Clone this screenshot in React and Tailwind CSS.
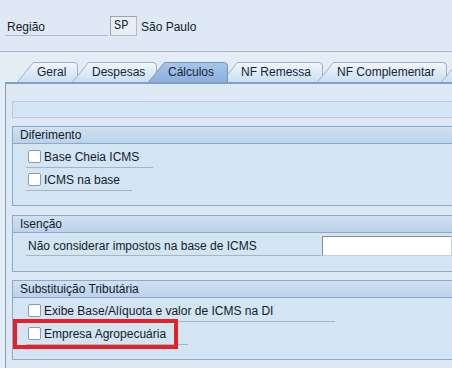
import React from 'react';

const tabs = [
  { label: 'Geral', w: 61, ml: 0 },
  { label: 'Despesas', w: 85, ml: -6 },
  { label: 'Cálculos', w: 80, ml: -9, active: true },
  { label: 'NF Remessa', w: 102, ml: -7 },
  { label: 'NF Complementar', w: 130, ml: -6 },
  { label: '', w: 40, ml: -6 },
];

function Tab({ label, w, ml, active }) {
  const id = active ? 'tabActive' : 'tabIdle';
  return (
    <div className={`relative h-[20px] shrink-0 ${active ? 'z-10' : ''}`} style={{ width: w, marginLeft: ml }}>
      <svg className="absolute inset-0" width={w} height="20" viewBox={`0 0 ${w} 20`}>
        <defs>
          <linearGradient id={id} x1="0" y1="0" x2="0" y2="1">
            <stop offset="0" stopColor={active ? '#a9c6e8' : '#f1f6fb'} />
            <stop offset="1" stopColor={active ? '#8bb0dc' : '#cddef0'} />
          </linearGradient>
        </defs>
        <path
          d={`M0.5 20 L16.5 0.5 L${w - 4} 0.5 Q${w - 0.5} 0.5 ${w - 0.5} 4 L${w - 0.5} 20`}
          fill={`url(#${id})`}
          stroke={active ? '#7596c0' : '#9ab1cc'}
          strokeWidth="1"
        />
      </svg>
      <span className="relative block pl-[20px] pt-[3px] text-[12px] leading-[15px] text-[#15233a] whitespace-nowrap">{label}</span>
    </div>
  );
}

function Check({ label, width }) {
  return (
    <div className="flex items-center h-[23px] border-b border-[#aab4c0] ml-[13px]" style={{ width }}>
      <span className="w-[13px] h-[13px] ml-[2px] mr-[3px] bg-white border border-[#8f9aa8] rounded-[2px] shrink-0" />
      <span className="whitespace-nowrap pt-[1px]">{label}</span>
    </div>
  );
}

function Group({ title, children, className }) {
  return (
    <div className={`border border-r-0 border-[#8ea8c7] bg-[#d3e4f3] ${className}`}>
      <div className="h-[17px] pl-[7px] leading-[17px] bg-gradient-to-b from-[#d0e0f1] to-[#bcd2ea] border-b border-[#8ea8c7]">
        {title}
      </div>
      {children}
    </div>
  );
}

export default function App() {
  return (
    <div className="relative w-[452px] h-[368px] overflow-hidden bg-[#dfe9f5] text-[12px] text-[#121b29]" style={{ fontFamily: '"Liberation Sans", Arial, sans-serif' }}>
      <div className="h-[52px] border-b border-[#a2b5cb] pt-[16px] pl-[5px] flex items-start">
        <div className="w-[103px] h-[20px] pl-[2px] pt-[4px] leading-[14px] border-b border-[#b4bec9]">Região</div>
        <div className="ml-[2px] w-[27px] h-[20px] pl-[3px] leading-[18px] text-[12px] bg-[#e9eef4] border border-[#b3bdc8] border-t-[#9aa5b1] border-l-[#9aa5b1]" style={{ fontFamily: '"Liberation Mono", monospace' }}>SP</div>
        <div className="ml-[4px] pt-[4px] leading-[14px]">São Paulo</div>
      </div>

      <div className="bg-[#e4ecf6] pt-[10px]">
        <div className="flex pl-[17px]">
          {tabs.map((t) => (
            <Tab key={t.label + t.w} {...t} />
          ))}
        </div>
        <div className="ml-[5px] border-l border-t-2 border-[#7f9fc4] bg-[#dde8f4] pl-[6px] pt-[17px] pb-[9px]">
          <div className="h-[17px] border border-r-0 border-[#b7cbe1] bg-[#d5e4f3]" />

          <Group title="Diferimento" className="mt-[8px] h-[80px]">
            <div className="pt-[1px]">
              <Check label="Base Cheia ICMS" width={127} />
              <Check label="ICMS na base" width={106} />
            </div>
          </Group>

          <Group title="Isenção" className="mt-[9px] h-[57px]">
            <div className="flex items-end pt-[3px]">
              <div className="ml-[13px] w-[295px] h-[20px] pl-[2px] leading-[20px] border-b border-[#aab4c0]">
                Não considerar impostos na base de ICMS
              </div>
              <div className="ml-[1px] flex-1 h-[20px] bg-white border border-[#c7ced6] border-t-[#8d8d8d] border-l-[#8d8d8d]" />
            </div>
          </Group>

          <Group title="Substituição Tributária" className="mt-[8px] h-[80px]">
            <div className="pt-[1px]">
              <Check label="Exibe Base/Alíquota e valor de ICMS na DI" width={309} />
              <Check label="Empresa Agropecuária" width={162} />
            </div>
          </Group>
        </div>
      </div>

      <div className="absolute left-[13px] top-[319px] w-[165px] h-[30px] border-4 border-[#e8202a]" />
    </div>
  );
}
